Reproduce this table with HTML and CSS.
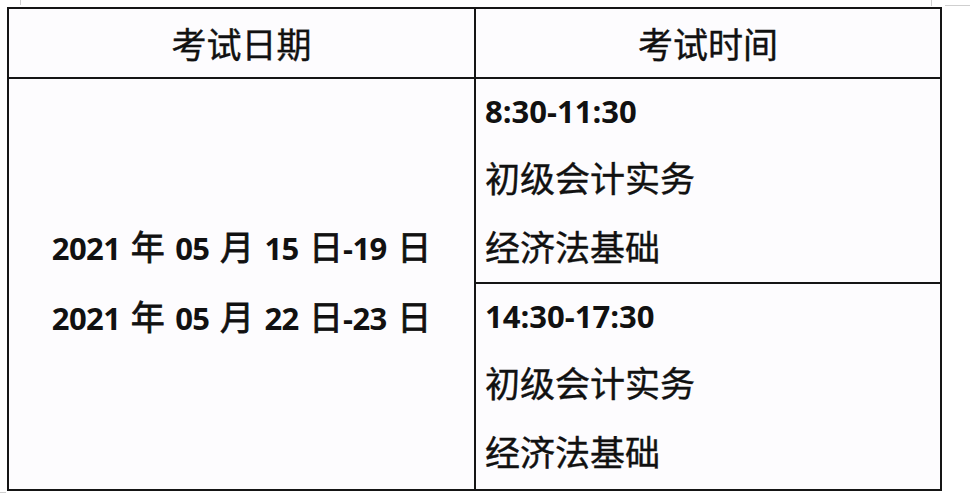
FILE: index.html
```html
<!DOCTYPE html>
<html lang="zh-CN">
<head>
<meta charset="utf-8">
<title>考试时间安排</title>
<link rel="stylesheet" href="styles.css">
</head>
<body>
<span class="mark mark-tl"></span>
<span class="mark mark-tr-v"></span>
<span class="mark mark-tr-h"></span>
<span class="mark mark-bl"></span>
<div class="sheet">
  <div class="cell head head-left">考试日期</div>
  <div class="cell head">考试时间</div>
  <div class="cell dates">
    <div class="date-line">2021 <span class="cjk">年</span> 05 <span class="cjk">月</span> 15 <span class="cjk">日</span>-19 <span class="cjk">日</span></div>
    <div class="date-line">2021 <span class="cjk">年</span> 05 <span class="cjk">月</span> 22 <span class="cjk">日</span>-23 <span class="cjk">日</span></div>
  </div>
  <div class="cell times">
    <div class="slot slot-first">
      <div class="time">8:30-11:30</div>
      <div class="subject">初级会计实务</div>
      <div class="subject">经济法基础</div>
    </div>
    <div class="slot">
      <div class="time">14:30-17:30</div>
      <div class="subject">初级会计实务</div>
      <div class="subject">经济法基础</div>
    </div>
  </div>
</div>
</body>
</html>
```

FILE: styles.css
```css
html, body {
  margin: 0;
  padding: 0;
  background: #ffffff;
}

body {
  position: relative;
  width: 970px;
  height: 500px;
  overflow: hidden;
  font-family: "Noto Sans CJK SC", sans-serif;
  color: #111111;
}

.sheet {
  box-sizing: border-box;
  margin: 7px 0 0 7px;
  width: 935px;
  height: 484px;
  border: 2px solid #151515;
  display: grid;
  grid-template-columns: 467px 464px;
  grid-template-rows: 70px 410px;
  background: #fdfcfe;
}

.cell {
  box-sizing: border-box;
}

.head {
  border-bottom: 2px solid #151515;
  display: flex;
  align-items: center;
  justify-content: center;
  font-size: 35px;
  font-weight: 400;
  line-height: 1;
  padding-bottom: 2px;
  -webkit-text-stroke: 0.4px #111111;
}

.head-left,
.dates {
  border-right: 2px solid #151515;
}

.dates {
  display: flex;
  flex-direction: column;
  justify-content: center;
  align-items: center;
  padding-bottom: 4px;
}

.date-line {
  font-family: "Open Sans", "Noto Sans CJK SC", sans-serif;
  font-weight: 700;
  font-size: 31px;
  letter-spacing: -0.6px;
  word-spacing: 3px;
  line-height: 67px;
  white-space: nowrap;
}

.cjk {
  font-family: "Noto Sans CJK SC", sans-serif;
  font-weight: 400;
  font-size: 34px;
  letter-spacing: 0;
  -webkit-text-stroke: 0.8px #111111;
}

.times {
  display: grid;
  grid-template-rows: 205px 205px;
}

.slot {
  box-sizing: border-box;
  padding-left: 9px;
  padding-top: 1px;
}

.slot-first {
  border-bottom: 2px solid #151515;
}

.time {
  font-family: "Open Sans", sans-serif;
  font-weight: 700;
  font-size: 31px;
  letter-spacing: 0;
  line-height: 62px;
}

.subject {
  font-size: 35px;
  line-height: 69px;
  font-weight: 400;
  -webkit-text-stroke: 0.4px #111111;
}

.mark {
  position: absolute;
  background: #cfcfcf;
}

.mark-tl {
  left: 20px;
  top: 0;
  width: 1px;
  height: 5px;
}

.mark-tr-v {
  left: 931px;
  top: 0;
  width: 1px;
  height: 6px;
}

.mark-tr-h {
  left: 945px;
  top: 5px;
  width: 25px;
  height: 1px;
}

.mark-bl {
  left: 0;
  top: 492px;
  width: 6px;
  height: 1px;
}
```
